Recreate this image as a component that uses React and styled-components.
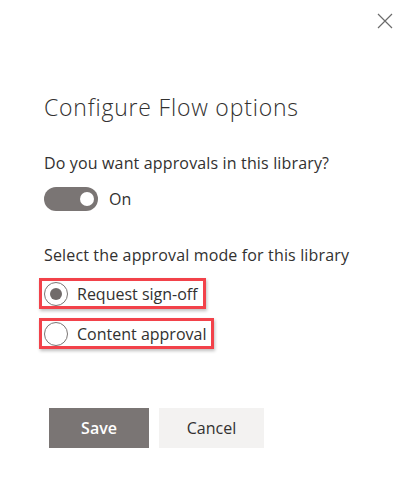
import React, { useState } from "react";
import styled, { createGlobalStyle } from "styled-components";

const Global = createGlobalStyle`
  html, body { margin: 0; padding: 0; background: #ffffff; }
  body { font-family: "Open Sans", "Noto Sans", sans-serif; color: #323130; }
  * { box-sizing: border-box; }
`;

const Panel = styled.div`
  width: 411px;
  height: 488px;
  background: #ffffff;
  display: flex;
  flex-direction: column;
`;

const CloseBar = styled.div`
  display: flex;
  justify-content: flex-end;
  padding: 5px 10px 0 0;
`;

const CloseButton = styled.button`
  width: 32px;
  height: 32px;
  display: flex;
  align-items: center;
  justify-content: center;
  border: none;
  background: transparent;
  padding: 0;
  color: #605e5c;
  cursor: pointer;
`;

const Body = styled.div`
  display: flex;
  flex-direction: column;
  padding: 0 0 0 44px;
`;

const Title = styled.h1`
  margin: 55px 0 0 0;
  font-size: 23px;
  line-height: 30px;
  font-weight: 300;
  letter-spacing: 0.8px;
  color: #323130;
`;

const Label = styled.div`
  margin-top: ${(p) => p.$top}px;
  font-size: 16px;
  line-height: 22px;
  letter-spacing: 0.15px;
  color: #323130;
`;

const ToggleRow = styled.div`
  margin-top: 13px;
  display: flex;
  align-items: center;
  gap: 11px;
`;

const Track = styled.div`
  width: 54px;
  height: 24px;
  border-radius: 12px;
  background: #7a7574;
  display: flex;
  align-items: center;
  justify-content: ${(p) => (p.$on ? "flex-end" : "flex-start")};
  padding: 0 4px;
`;

const Thumb = styled.div`
  width: 14px;
  height: 14px;
  border-radius: 50%;
  background: #ffffff;
`;

const ToggleText = styled.span`
  font-size: 16px;
  line-height: 22px;
  color: #323130;
`;

const Options = styled.div`
  margin-top: 12px;
  display: flex;
  flex-direction: column;
  align-items: flex-start;
  gap: 9px;
  margin-left: -5px;
`;

const Highlight = styled.label`
  display: flex;
  align-items: center;
  gap: 9px;
  height: 31px;
  padding: 0 5px 0 2px;
  border: 3px solid #f2424a;
  box-shadow: 1px 2px 3px rgba(0, 0, 0, 0.25);
  cursor: pointer;
`;

const Circle = styled.span`
  width: 24px;
  height: 24px;
  border-radius: 50%;
  border: 1.5px solid #7a7574;
  display: flex;
  align-items: center;
  justify-content: center;
  flex: none;
`;

const Dot = styled.span`
  width: 12px;
  height: 12px;
  border-radius: 50%;
  background: #716b6a;
`;

const OptionText = styled.span`
  font-size: 16px;
  line-height: 22px;
  color: #323130;
`;

const Buttons = styled.div`
  margin-top: 59px;
  margin-left: 5px;
  display: flex;
  gap: 10px;
`;

const Button = styled.button`
  height: 40px;
  width: ${(p) => p.$w}px;
  border: none;
  font-family: "Open Sans", "Noto Sans", sans-serif;
  font-size: 16px;
  font-weight: ${(p) => (p.$primary ? 600 : 400)};
  background: ${(p) => (p.$primary ? "#7a7574" : "#f3f2f1")};
  color: ${(p) => (p.$primary ? "#ffffff" : "#323130")};
  cursor: pointer;
`;

const options = ["Request sign-off", "Content approval"];

export default function App() {
  const [selected] = useState(0);
  return (
    <>
      <Global />
      <Panel>
        <CloseBar>
          <CloseButton aria-label="Close">
            <svg width="16" height="16" viewBox="0 0 16 16">
              <path d="M1 1 L15 15 M15 1 L1 15" stroke="#6b6b6b" strokeWidth="1.2" fill="none" />
            </svg>
          </CloseButton>
        </CloseBar>
        <Body>
          <Title>Configure Flow options</Title>
          <Label $top={30}>Do you want approvals in this library?</Label>
          <ToggleRow>
            <Track $on>
              <Thumb />
            </Track>
            <ToggleText>On</ToggleText>
          </ToggleRow>
          <Label $top={33}>Select the approval mode for this library</Label>
          <Options>
            {options.map((o, i) => (
              <Highlight key={o}>
                <Circle>{selected === i && <Dot />}</Circle>
                <OptionText>{o}</OptionText>
              </Highlight>
            ))}
          </Options>
          <Buttons>
            <Button $primary $w={100}>Save</Button>
            <Button $w={105}>Cancel</Button>
          </Buttons>
        </Body>
      </Panel>
    </>
  );
}
